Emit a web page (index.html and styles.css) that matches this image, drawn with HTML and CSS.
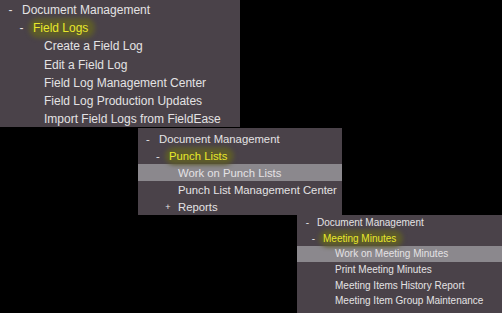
FILE: index.html
```html
<!DOCTYPE html>
<html>
<head>
<meta charset="utf-8">
<link rel="stylesheet" href="styles.css">
</head>
<body>
<div class="canvas">
  <div class="panel p1">
    <div class="row l0"><span class="sym">-</span><span class="txt">Document Management</span></div>
    <div class="row l1"><span class="sym">-</span><span class="txt sel">Field Logs</span></div>
    <div class="row l2"><span class="txt">Create a Field Log</span></div>
    <div class="row l2"><span class="txt">Edit a Field Log</span></div>
    <div class="row l2"><span class="txt">Field Log Management Center</span></div>
    <div class="row l2"><span class="txt">Field Log Production Updates</span></div>
    <div class="row l2"><span class="txt">Import Field Logs from FieldEase</span></div>
  </div>
  <div class="panel p2">
    <div class="row l0"><span class="sym">-</span><span class="txt">Document Management</span></div>
    <div class="row l1"><span class="sym">-</span><span class="txt sel">Punch Lists</span></div>
    <div class="row l2 hl"><span class="txt">Work on Punch Lists</span></div>
    <div class="row l2"><span class="txt">Punch List Management Center</span></div>
    <div class="row l1b"><span class="sym plus">+</span><span class="txt">Reports</span></div>
  </div>
  <div class="panel p3">
    <div class="row l0"><span class="sym">-</span><span class="txt">Document Management</span></div>
    <div class="row l1"><span class="sym">-</span><span class="txt sel">Meeting Minutes</span></div>
    <div class="row l2 hl"><span class="txt">Work on Meeting Minutes</span></div>
    <div class="row l2"><span class="txt">Print Meeting Minutes</span></div>
    <div class="row l2"><span class="txt">Meeting Items History Report</span></div>
    <div class="row l2"><span class="txt">Meeting Item Group Maintenance</span></div>
  </div>
</div>
</body>
</html>
```

FILE: styles.css
```css
html, body {
  margin: 0;
  padding: 0;
  background: #000;
}
.canvas {
  position: relative;
  width: 502px;
  height: 313px;
  overflow: hidden;
  background: #000;
  font-family: "Liberation Sans", Arial, sans-serif;
  color: #e4e2e4;
}
.panel {
  position: absolute;
  background: #4a4249;
  overflow: hidden;
  box-sizing: border-box;
}
.row {
  display: flex;
  align-items: center;
  white-space: nowrap;
}
.sym {
  display: inline-block;
  text-align: center;
}
.sel {
  color: #e8e82a;
  background: #5c5a2c;
  border-radius: 6px;
  box-shadow: 0 0 4px 3px #5c5a2c;
}
.hl {
  background: #8b888d;
}

/* panel 1 */
.p1 {
  left: 0;
  top: 0;
  width: 240px;
  height: 127px;
  padding-top: 1px;
  font-size: 12px;
}
.p1 .row { height: 18.2px; }
.p1 .l0 { padding-left: 6px; }
.p1 .l1 { padding-left: 17px; }
.p1 .l2 { padding-left: 44px; }
.p1 .sym { width: 9px; margin-right: 7px; }
.p1 .sel { padding: 0 4px 0 1px; margin-left: -1px; }

/* panel 2 */
.p2 {
  left: 138px;
  top: 128px;
  width: 204px;
  height: 87px;
  padding-top: 2px;
  font-size: 11.3px;
}
.p2 .row { height: 17px; }
.p2 .l0 { padding-left: 6px; }
.p2 .l1 { padding-left: 16px; }
.p2 .l1b { padding-left: 26px; }
.p2 .l2 { padding-left: 40px; }
.p2 .sym { width: 8px; margin-right: 7px; }
.p2 .plus { font-size: 9px; margin-right: 6px; }
.p2 .sel { padding: 0 4px 0 1px; margin-left: -1px; }

/* panel 3 */
.p3 {
  left: 297px;
  top: 215px;
  width: 205px;
  height: 98px;
  font-size: 10px;
}
.p3 .row { height: 15.6px; }
.p3 .l0 { padding-left: 7px; }
.p3 .l1 { padding-left: 13px; }
.p3 .l2 { padding-left: 38px; }
.p3 .sym { width: 7px; margin-right: 6px; }
.p3 .sel { padding: 0 4px 0 1px; margin-left: -1px; }
```
